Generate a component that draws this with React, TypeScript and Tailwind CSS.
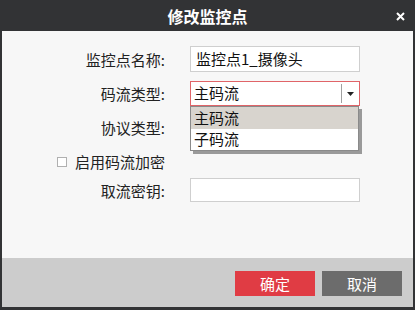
import React from "react";

const font = { fontFamily: '"Noto Sans CJK SC", "Liberation Sans", sans-serif' };

function Label({ children }: { children: React.ReactNode }) {
  return (
    <div className="w-[163px] shrink-0 text-right text-[15px] leading-none text-[#222]">
      {children}
    </div>
  );
}

export default function App() {
  return (
    <div className="w-[415px] h-[310px] bg-[#323335] flex flex-col px-[2px] pb-[3px]" style={font}>
      {/* Title bar */}
      <div className="h-[31px] shrink-0 relative flex items-center justify-center">
        <span className="text-white font-bold text-[16px] leading-none">修改监控点</span>
        <svg className="absolute right-[8px] top-[12px]" width="9" height="9" viewBox="0 0 9 9">
          <path d="M1 1 L8 8 M8 1 L1 8" stroke="#fff" strokeWidth="2" />
        </svg>
      </div>

      {/* Body */}
      <div className="flex-1 bg-[#f7f7f7] pt-[15px] flex flex-col">
        <div className="h-[26px] flex items-center">
          <Label>监控点名称:</Label>
          <div className="ml-[25px] w-[170px] h-[26px] bg-white border border-[#cfcfcf] flex items-center pl-[5px] text-[15px] text-[#111]">
            监控点1_摄像头
          </div>
        </div>

        <div className="mt-[9px] h-[25px] flex items-center relative z-10">
          <Label>码流类型:</Label>
          <div className="ml-[25px] w-[170px] h-[25px] relative">
            <div className="h-full bg-white border border-[#e06468] flex items-center">
              <span className="pl-[3px] text-[15px] text-[#111] flex-1">主码流</span>
              <div className="w-px h-[19px] bg-[#a0a0a0]" />
              <div className="w-[17px] flex justify-center">
                <svg width="7" height="4" viewBox="0 0 7 4">
                  <path d="M0 0 H7 L3.5 4 Z" fill="#222" />
                </svg>
              </div>
            </div>
            <div className="absolute left-0 top-full w-[169px] bg-white border border-[#8a8a8a] shadow-[3px_3px_0_#9a9a9a] text-[15px] text-[#111]">
              <div className="h-[22px] bg-[#d8d4ce] flex items-center pl-[3px]">主码流</div>
              <div className="h-[21px] flex items-center pl-[3px]">子码流</div>
            </div>
          </div>
        </div>

        <div className="mt-[9px] h-[25px] flex items-center">
          <Label>协议类型:</Label>
        </div>

        <div className="mt-[9px] h-[25px] flex items-center pl-[55px]">
          <div className="w-[10px] h-[10px] border border-[#b0b0b0] bg-white" />
          <span className="ml-[8px] text-[15px] leading-none text-[#222]">启用码流加密</span>
        </div>

        <div className="mt-[4px] h-[24px] flex items-center">
          <Label>取流密钥:</Label>
          <div className="ml-[25px] w-[170px] h-[24px] bg-white border border-[#cfcfcf]" />
        </div>
      </div>

      {/* Footer */}
      <div className="h-[49px] shrink-0 bg-[#cccccc] flex items-center justify-end gap-[7px] pr-[11px] pt-[1px]">
        <button className="w-[80px] h-[25px] bg-[#e03c44] text-white text-[15px] leading-none">确定</button>
        <button className="w-[80px] h-[25px] bg-[#6c6c6c] text-white text-[15px] leading-none">取消</button>
      </div>
    </div>
  );
}
